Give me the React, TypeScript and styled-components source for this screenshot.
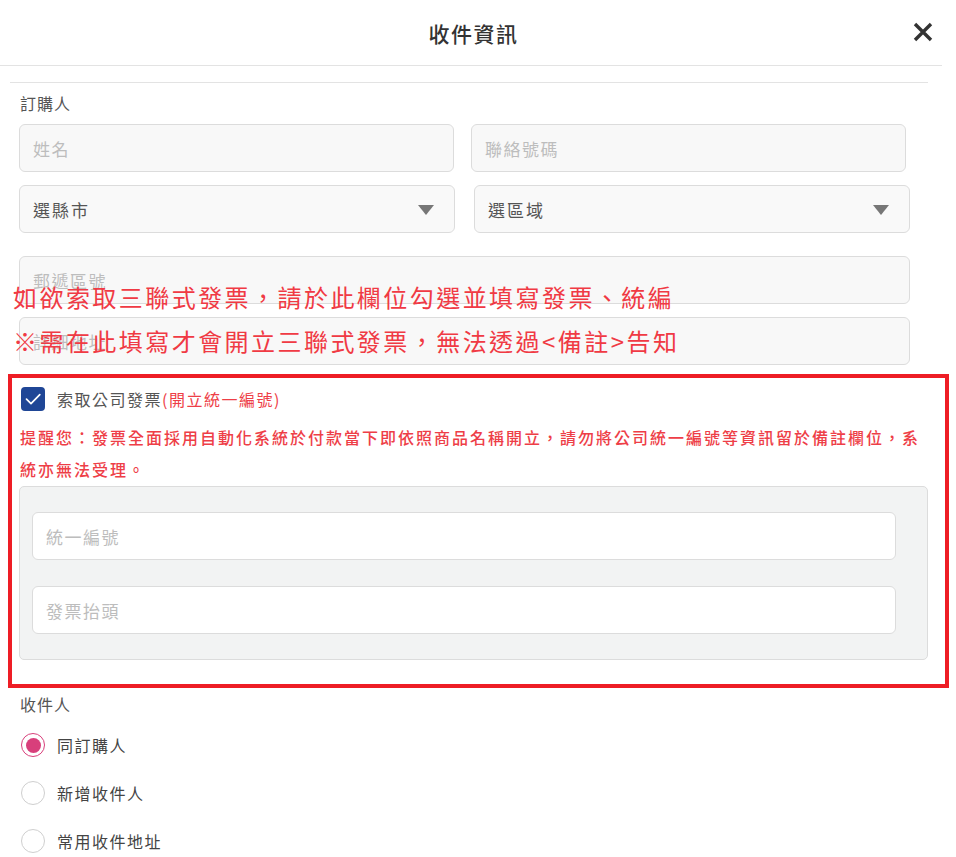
import React from "react";
import styled, { createGlobalStyle } from "styled-components";

const GlobalStyle = createGlobalStyle`
  body {
    margin: 0;
    background: #fff;
    font-family: "Noto Sans CJK TC", "Noto Sans", sans-serif;
    color: #555;
  }
  * { box-sizing: border-box; }
`;

export default function App() {
  return (
    <Page lang="zh-TW">
      <GlobalStyle />
      <Header>
        <span />
        <Title>收件資訊</Title>
        <CloseButton aria-label="close">
          <svg width="20" height="20" viewBox="0 0 20 20">
            <path d="M2 2 L18 18 M18 2 L2 18" stroke="#333" strokeWidth="3.4" />
          </svg>
        </CloseButton>
      </Header>
      <Divider />

      <Section>
        <Label>訂購人</Label>
        <Row $gap={17} $width={887} $top={10}>
          <Field placeholder="姓名" />
          <Field placeholder="聯絡號碼" />
        </Row>
        <Row $gap={19} $width={891} $top={13}>
          <Select>
            選縣市
            <Caret />
          </Select>
          <Select>
            選區域
            <Caret />
          </Select>
        </Row>
        <Field $width={891} $top={23} placeholder="郵遞區號" />
        <Field $width={891} $top={13} placeholder="詳細地址" />
      </Section>

      <InvoiceBox>
        <CheckRow>
          <CheckBox>
            <svg width="20" height="20" viewBox="0 0 20 20">
              <path d="M3.5 10.2 L8 14.6 L16.8 5.6" fill="none" stroke="#fff" strokeWidth="1.7" strokeLinecap="round" strokeLinejoin="round" />
            </svg>
          </CheckBox>
          <CheckLabel>
            索取公司發票<Red>(開立統一編號)</Red>
          </CheckLabel>
        </CheckRow>
        <Warning>
          提醒您：發票全面採用自動化系統於付款當下即依照商品名稱開立，請勿將公司統一編號等資訊留於備註欄位，系統亦無法受理。
        </Warning>
        <GrayPanel>
          <Field $width={864} $white placeholder="統一編號" />
          <Field $width={864} $white $top={26} placeholder="發票抬頭" />
        </GrayPanel>
      </InvoiceBox>

      <Section>
        <Label $top={5}>收件人</Label>
        <RadioList>
          <RadioRow>
            <Radio $checked />
            <RadioLabel>同訂購人</RadioLabel>
          </RadioRow>
          <RadioRow>
            <Radio />
            <RadioLabel>新增收件人</RadioLabel>
          </RadioRow>
          <RadioRow>
            <Radio />
            <RadioLabel>常用收件地址</RadioLabel>
          </RadioRow>
        </RadioList>
      </Section>

      <Annotation>
        <div>如欲索取三聯式發票，請於此欄位勾選並填寫發票、統編</div>
        <div>※需在此填寫才會開立三聯式發票，無法透過&lt;備註&gt;告知</div>
      </Annotation>
    </Page>
  );
}

const Page = styled.div`
  position: relative;
  width: 956px;
  height: 857px;
  overflow: hidden;
`;

const Header = styled.header`
  width: 942px;
  height: 66px;
  border-bottom: 1px solid #e3e3e3;
  display: grid;
  grid-template-columns: 1fr auto 1fr;
  align-items: center;
  padding-right: 9px;
`;

const Title = styled.h1`
  margin: 0 0 0 14px;
  font-size: 21px;
  font-weight: 500;
  letter-spacing: 1.5px;
  color: #333;
`;

const CloseButton = styled.button`
  justify-self: end;
  background: none;
  border: 0;
  padding: 0;
  width: 20px;
  height: 20px;
  margin-top: -1px;
  display: flex;
`;

const Divider = styled.hr`
  margin: 16px 0 0 10px;
  width: 918px;
  border: 0;
  border-top: 1px solid #e3e3e3;
`;

const Section = styled.section`
  padding-left: 19px;
`;

const Label = styled.div<{ $top?: number }>`
  margin-top: ${(p) => p.$top ?? 9}px;
  font-size: 16px;
  line-height: 22px;
  letter-spacing: 1px;
  color: #555;
  padding-left: 1px;
`;

const Row = styled.div<{ $gap: number; $width: number; $top: number }>`
  display: grid;
  grid-template-columns: 1fr 1fr;
  gap: ${(p) => p.$gap}px;
  width: ${(p) => p.$width}px;
  margin-top: ${(p) => p.$top}px;
`;

const Field = styled.input<{ $width?: number; $top?: number; $white?: boolean }>`
  display: block;
  width: ${(p) => (p.$width ? `${p.$width}px` : "100%")};
  height: 48px;
  margin-top: ${(p) => p.$top ?? 0}px;
  padding: 0 13px;
  border: 1px solid #dcdcdc;
  border-radius: 6px;
  background: ${(p) => (p.$white ? "#fff" : "#f8f8f8")};
  font-family: inherit;
  font-size: 17px;
  letter-spacing: 1.5px;
  color: #555;
  outline: none;
  &::placeholder {
    color: #bdbdbd;
  }
`;

const Select = styled.div`
  height: 48px;
  padding: 0 20px 0 13px;
  border: 1px solid #dcdcdc;
  border-radius: 6px;
  background: #f9f9f9;
  display: flex;
  align-items: center;
  justify-content: space-between;
  font-size: 17px;
  letter-spacing: 2px;
  color: #555;
`;

const Caret = styled.span`
  width: 0;
  height: 0;
  border-left: 8px solid transparent;
  border-right: 8px solid transparent;
  border-top: 10px solid #777;
  margin-top: 2px;
`;

const InvoiceBox = styled.div`
  margin: 9px 0 0 8px;
  width: 941px;
  height: 314px;
  border: 4px solid #ee1d25;
  padding: 9px 0 0 8px;
`;

const CheckRow = styled.div`
  display: flex;
  align-items: center;
  gap: 12px;
  padding-left: 1px;
  height: 24px;
`;

const CheckBox = styled.span`
  width: 24px;
  height: 24px;
  border-radius: 4px;
  background: #1f4696;
  display: flex;
  align-items: center;
  justify-content: center;
`;

const CheckLabel = styled.span`
  font-size: 16px;
  letter-spacing: 1.5px;
  color: #555;
`;

const Red = styled.span`
  color: #ee3e47;
`;

const Warning = styled.p`
  margin: 10px 0 1px 0;
  width: 912px;
  font-size: 16px;
  line-height: 32px;
  letter-spacing: 2px;
  font-weight: 500;
  color: #ee3e47;
`;

const GrayPanel = styled.div`
  width: 909px;
  height: 174px;
  margin-left: -1px;
  padding: 25px 0 0 12px;
  background: #f2f3f3;
  border: 1px solid #dcdcdc;
  border-radius: 5px;
`;

const RadioList = styled.div`
  margin-top: 6px;
`;

const RadioRow = styled.label`
  display: flex;
  align-items: center;
  gap: 12px;
  height: 48px;
  padding-left: 2px;
`;

const Radio = styled.span<{ $checked?: boolean }>`
  width: 24px;
  height: 24px;
  border-radius: 50%;
  border: 1.5px solid ${(p) => (p.$checked ? "#d83f7b" : "#cfcfcf")};
  background: #fff;
  display: flex;
  align-items: center;
  justify-content: center;
  &::after {
    content: "";
    display: ${(p) => (p.$checked ? "block" : "none")};
    width: 15px;
    height: 15px;
    border-radius: 50%;
    background: #d83f7b;
  }
`;

const RadioLabel = styled.span`
  font-size: 16px;
  letter-spacing: 1.5px;
  color: #444;
`;

const Annotation = styled.div`
  position: absolute;
  left: 13px;
  top: 275px;
  font-size: 24px;
  line-height: 44px;
  letter-spacing: 2.45px;
  color: #f03a44;
  pointer-events: none;
  white-space: nowrap;
`;
